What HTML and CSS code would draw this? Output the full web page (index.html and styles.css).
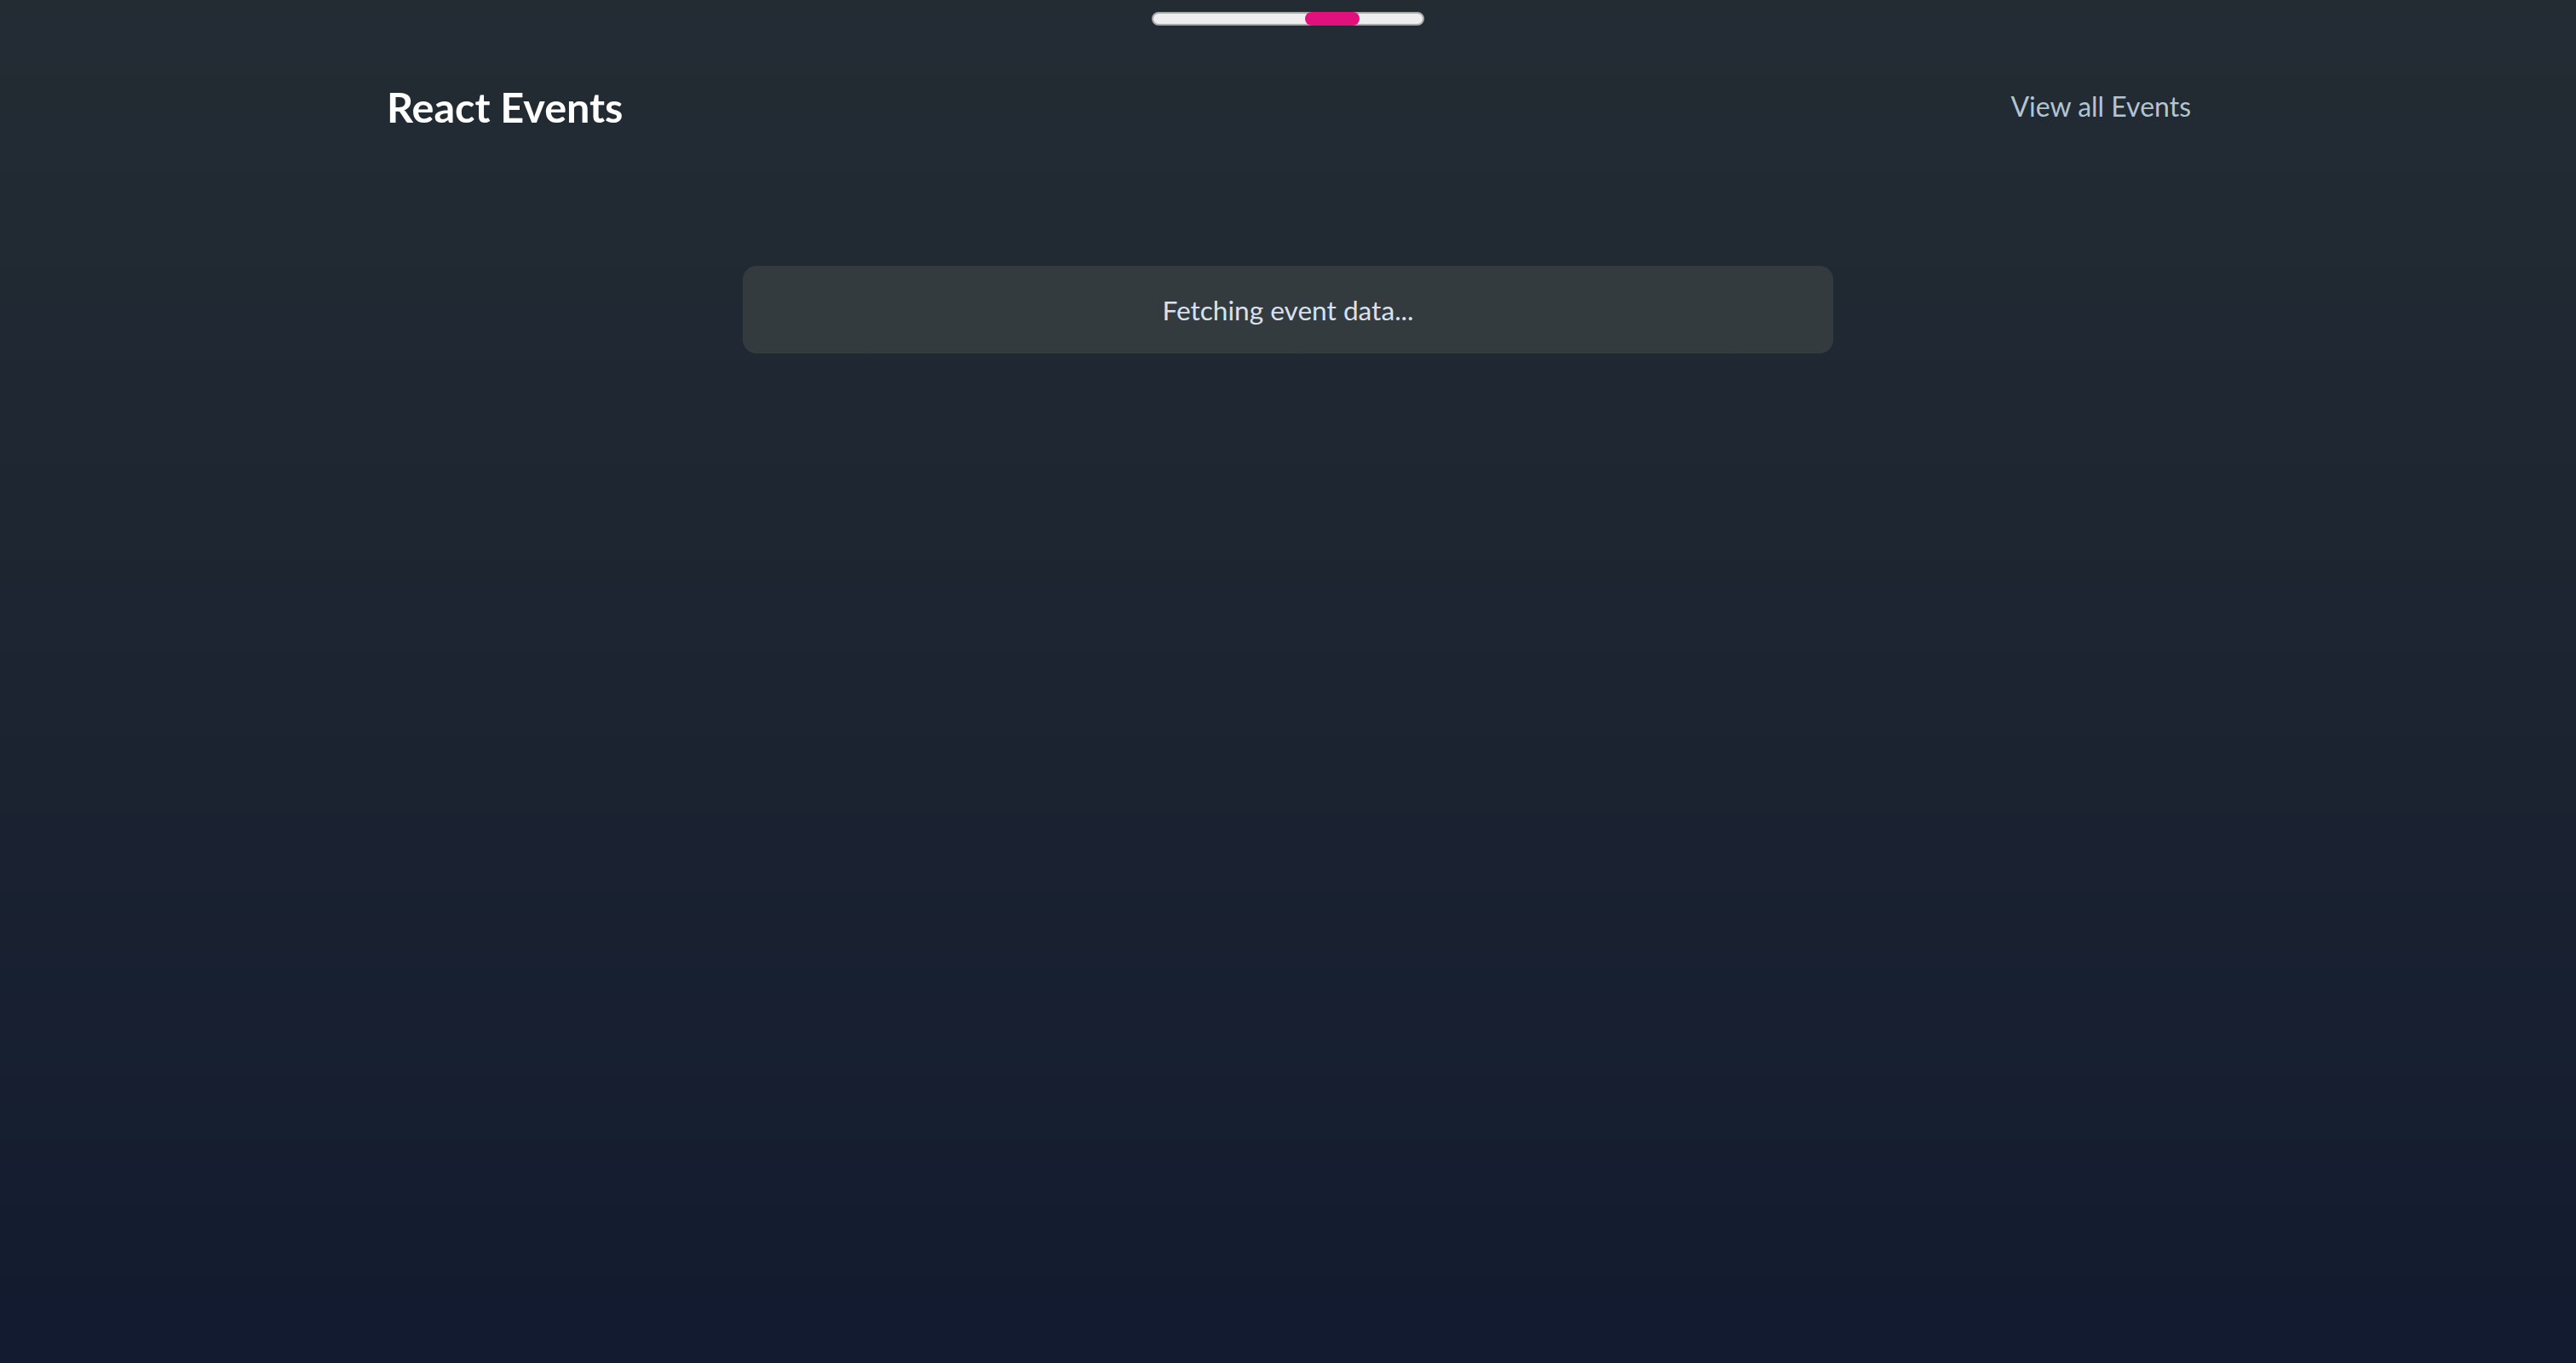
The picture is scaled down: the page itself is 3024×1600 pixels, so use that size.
FILE: index.html
```html
<!DOCTYPE html>
<html lang="en">
<head>
<meta charset="utf-8">
<title>React Events</title>
<link rel="stylesheet" href="styles.css">
</head>
<body>
<div class="progress"><div class="progress-thumb"></div></div>
<main class="container">
  <header class="header">
    <h1 class="title">React Events</h1>
    <a class="view-all" href="#">View all Events</a>
  </header>
  <div class="loading">Fetching event data...</div>
</main>
</body>
</html>
```
FILE: styles.css
```css
html, body {
  margin: 0;
  padding: 0;
}
body {
  min-height: 1600px;
  background: linear-gradient(180deg, #232b33 0%, #1c2431 50%, #121b2f 100%);
  font-family: Lato, "Open Sans", sans-serif;
  color: #fff;
}
.progress {
  position: relative;
  width: 320px;
  height: 16px;
  margin: 14px auto 0;
  box-sizing: border-box;
  border: 2px solid #a9a9a9;
  border-radius: 8px;
  background: #eeeeee;
}
.progress-thumb {
  position: absolute;
  left: 178px;
  top: -2px;
  width: 64px;
  height: 16px;
  border-radius: 8px;
  background: #e0107c;
}
.container {
  width: 2120px;
  margin: 0 auto;
}
.header {
  display: flex;
  justify-content: space-between;
  align-items: center;
  padding-top: 66px;
}
.title {
  margin: 0 0 0 2px;
  font-size: 48.5px;
  font-weight: 700;
  line-height: 1.2;
  color: #ffffff;
}
.view-all {
  font-size: 32px;
  color: #b2c4d3;
  text-decoration: none;
  line-height: 1.2;
}
.loading {
  width: 1280px;
  height: 103px;
  margin: 158px auto 0;
  box-sizing: border-box;
  display: flex;
  align-items: center;
  justify-content: center;
  background: #343b3f;
  border-radius: 16px;
  font-size: 31.6px;
  color: #d9e1ee;
}
```
